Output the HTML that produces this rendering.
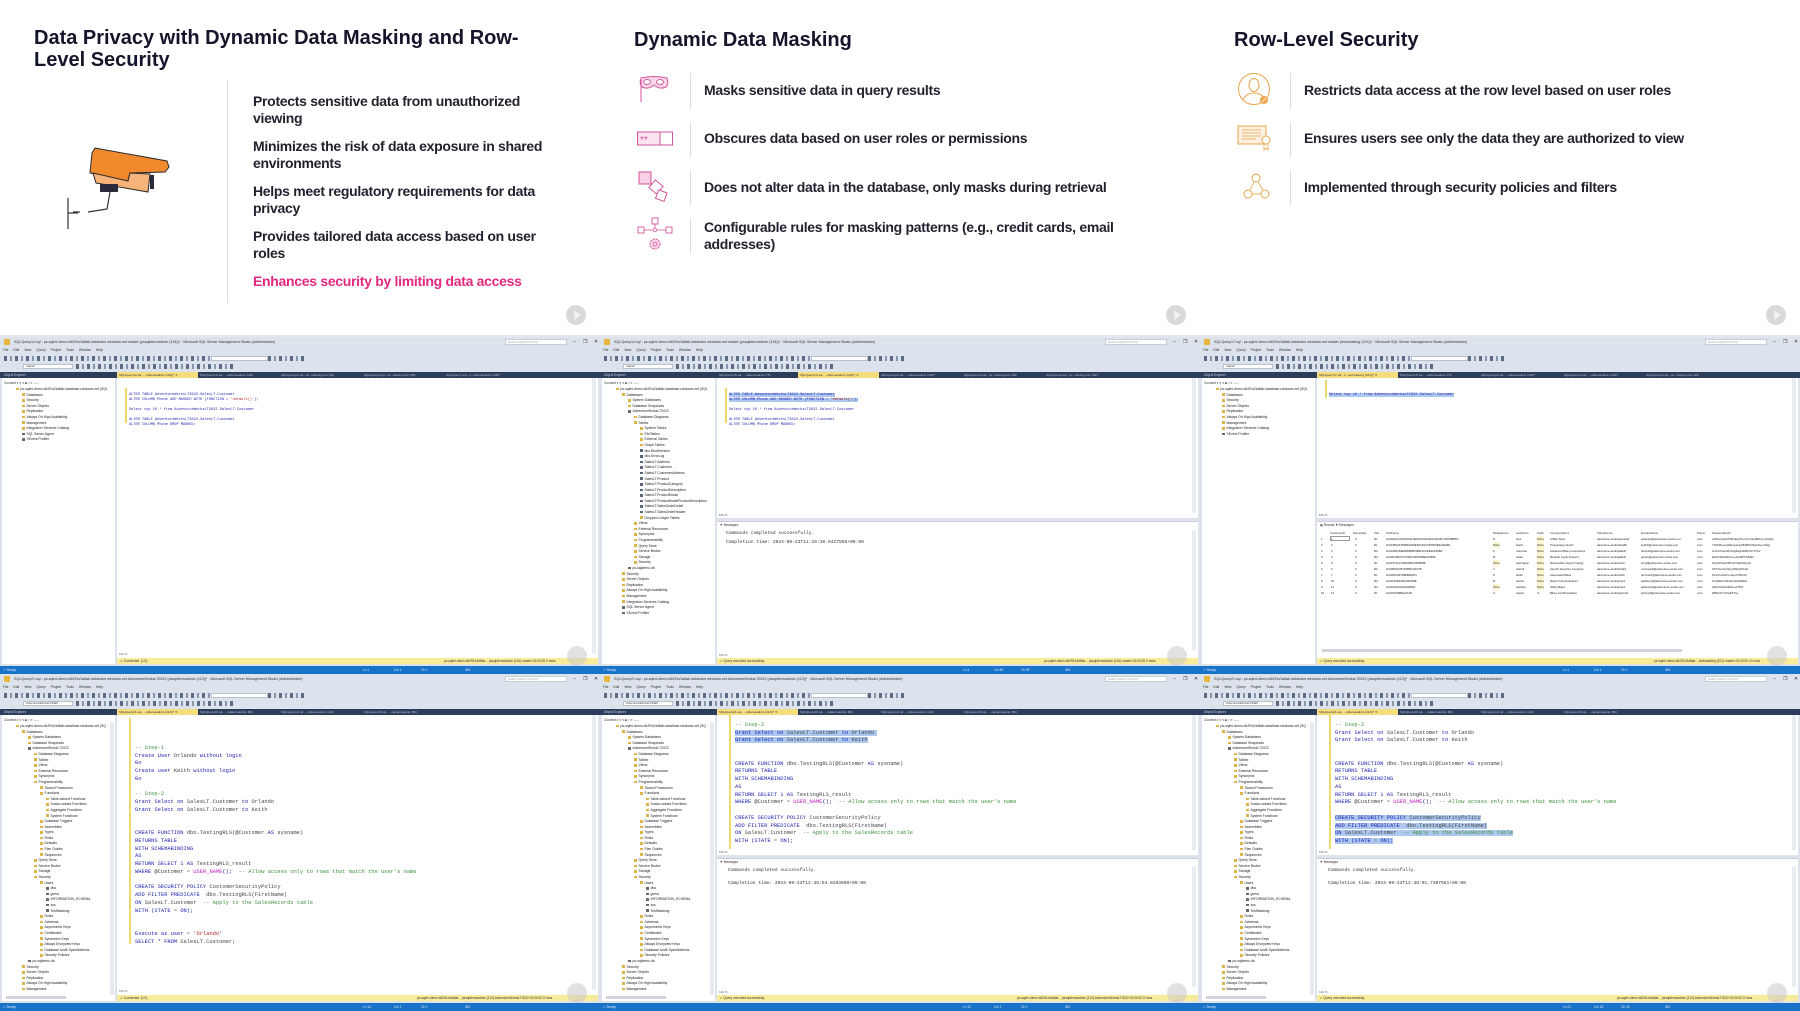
<!DOCTYPE html>
<html><head><meta charset="utf-8">
<style>
*{margin:0;padding:0;box-sizing:border-box}
body{width:1800px;height:1011px;background:#fff;position:relative;overflow:hidden;font-family:"Liberation Sans",sans-serif}
.slide{position:absolute;top:0;width:600px;height:337px;background:#fff;overflow:hidden}
.slide .h{position:absolute;left:34px;top:27px;font-size:20px;line-height:22px;font-weight:bold;color:#14142b;white-space:nowrap}
.slide .b{position:absolute;font-size:14px;line-height:17px;font-weight:bold;color:#22222e;letter-spacing:-0.3px;white-space:nowrap}
.slide .sep{position:absolute;width:1px;background:#ddd}
.play{position:absolute;width:20px;height:20px;border-radius:50%;background:#d9d9d9}
.play:after{content:"";position:absolute;left:8px;top:5px;border-left:7px solid #f2f2f2;border-top:5px solid transparent;border-bottom:5px solid transparent}
.strip{position:absolute;left:0;top:335px;width:1800px;height:2px;background:#e5e7ea}

.win{position:absolute;width:600px;height:337px;background:#dde3ec;overflow:hidden;font-family:"Liberation Sans",sans-serif;color:#333}
.win .tt{position:absolute;left:14px;top:3px;font-size:3.6px;white-space:nowrap;color:#333}
.win .ico{position:absolute;left:4px;top:2px;width:6px;height:6px;background:#e8b43a;border-radius:1px}
.win .qs{position:absolute;left:505px;top:2px;width:62px;height:6px;background:#fff;border:1px solid #c9cfd8;font-size:3px;color:#999;padding-left:2px;line-height:4px}
.win .ctl{position:absolute;top:2px;font-size:5px;color:#333}
.win .mn{position:absolute;left:3px;top:11px;font-size:3.4px;word-spacing:4px;white-space:nowrap}
.win .tb{position:absolute;left:4px;height:5px;width:300px;background:repeating-linear-gradient(90deg,#5a6b86 0 3px,transparent 3px 6px,#8a96aa 6px 8px,transparent 8px 11px)}
.win .box{position:absolute;height:5px;background:#fff;border:1px solid #b9c1cc;font-size:3px;line-height:3.5px;padding-left:2px}
.win .dk{position:absolute;left:0;top:35px;width:600px;height:6px;background:#2c3d5b}
.win .oeh{position:absolute;left:4px;top:36px;font-size:3.2px;color:#c8d0de;white-space:nowrap}
.win .tab{position:absolute;top:35px;height:6px;width:81px;font-size:3px;line-height:6px;color:#b8c2d4;padding-left:2px;white-space:nowrap;overflow:hidden}
.win .tab.a{background:#f5dc7c;color:#333}
.win .oe{position:absolute;left:2px;top:41px;width:113px;height:286px;background:#fff;overflow:hidden}
.win .con{position:absolute;left:2px;top:2px;font-size:3.2px;color:#333;white-space:nowrap}
.win .tr{position:absolute;left:0;top:9px;width:113px}
.win .tr div{height:5.6px;font-size:3.4px;line-height:5.6px;white-space:nowrap;color:#222;position:relative}
.win .tr div:before{content:"";display:inline-block;width:3px;height:2.6px;background:#dcb549;margin-right:1.5px;vertical-align:middle}
.win .tr div.u:before{background:#6b6b6b}
.win .tr div.tbl:before{background:#5b6579}
.win .ed{position:absolute;left:117px;top:41px;width:481px;height:280px;background:#fff;overflow:hidden}
.win .mg{position:absolute;width:1.5px;background:#efd96a}
.win .code{position:absolute;font-family:"Liberation Mono",monospace;white-space:pre;color:#1b1bb0}
.win .code div{white-space:pre}
.g{color:#3d8f3d}.r{color:#b21d1d}.k{color:#2424c0}.d{color:#444}.m{color:#c020c0}.gr{color:#888}
.sel{background:#acc8ef}
.win .vs{position:absolute;right:2px;width:4px;background:#e9ecf0}
.win .ys{position:absolute;left:117px;top:321px;width:481px;height:6px;background:#f8ec9a;font-size:3.2px;line-height:6px;white-space:nowrap;color:#333}
.win .bs{position:absolute;left:0;top:329px;width:600px;height:8px;background:#1872c9;font-size:3.2px;line-height:8px;color:#dbe8f7;white-space:nowrap}
.win .bs span{position:absolute}
.win .pp{position:absolute;left:567px;top:309px;width:20px;height:20px;border-radius:50%;background:rgba(200,200,200,.55)}
.win .zm{position:absolute;font-size:3px;color:#555}
.win .pane{position:absolute;left:117px;width:481px;background:#fff;overflow:hidden}
.win .ptab{position:absolute;font-size:3.2px;color:#333;white-space:nowrap}
.win .msg{position:absolute;font-family:"Liberation Mono",monospace;font-size:4.6px;color:#333;white-space:pre}
.grid{position:absolute;left:0;top:0;font-size:2.8px;color:#222;white-space:nowrap}
.grid div{position:absolute;height:6px;line-height:6px;width:480px}
.grid span{position:absolute;overflow:hidden}
.hs{position:absolute;height:3px;background:#cfd4db}
</style></head><body>

<!-- ============ SLIDE 1 ============ -->
<div class="slide" style="left:0">
  <div class="h">Data Privacy with Dynamic Data Masking and Row-<br>Level Security</div>
  <div class="sep" style="left:227px;top:80px;height:223px"></div>
  <svg style="position:absolute;left:60px;top:140px" width="120" height="100" viewBox="60 140 120 100">
    <polygon points="95,148 167,161 169,167 165,172 130,173 128,181 90,173 92,153" fill="#f08a2c" stroke="#2a2a2a" stroke-width="1"/>
    <polygon points="93,173 128,181 130,173 150,174 148,192 96,183" fill="#f6b47a" stroke="#2a2a2a" stroke-width="1"/>
    <rect x="150" y="175" width="4" height="14" fill="#2a2a3a"/>
    <rect x="100" y="184" width="18" height="8" fill="#2a2a3a"/>
    <polyline points="110,192 107,209 88,212" fill="none" stroke="#333" stroke-width="1.2"/>
    <line x1="80" y1="212" x2="73" y2="212" stroke="#333" stroke-width="1.2"/>
    <line x1="68" y1="198" x2="68" y2="229" stroke="#333" stroke-width="1.2"/>
    <line x1="68" y1="213" x2="78" y2="213" stroke="#333" stroke-width="1.2"/>
  </svg>
  <div class="b" style="left:253px;top:93px">Protects sensitive data from unauthorized<br>viewing</div>
  <div class="b" style="left:253px;top:138px">Minimizes the risk of data exposure in shared<br>environments</div>
  <div class="b" style="left:253px;top:183px">Helps meet regulatory requirements for data<br>privacy</div>
  <div class="b" style="left:253px;top:228px">Provides tailored data access based on user<br>roles</div>
  <div class="b" style="left:253px;top:273px;color:#e3287f">Enhances security by limiting data access</div>
  <div class="play" style="left:566px;top:305px"></div>
</div>

<!-- ============ SLIDE 2 ============ -->
<div class="slide" style="left:600px">
  <div class="h" style="top:29px">Dynamic Data Masking</div>
  <svg style="position:absolute;left:36px;top:74px" width="40" height="32" viewBox="0 0 40 32">
    <path d="M5 4 Q18 1 31 4 Q33 10 30 13 Q24 16 18 11 Q12 16 6 13 Q3 10 5 4Z" fill="#f9d6e8" stroke="#d4559b" stroke-width="1"/>
    <ellipse cx="11" cy="8" rx="3.5" ry="2.5" fill="#fff" stroke="#d4559b" stroke-width=".9"/>
    <ellipse cx="24" cy="8" rx="3.5" ry="2.5" fill="#fff" stroke="#d4559b" stroke-width=".9"/>
    <line x1="5" y1="6" x2="5" y2="28" stroke="#d4559b" stroke-width="1"/>
  </svg>
  <div class="sep" style="left:90px;top:73px;height:36px"></div>
  <div class="b" style="left:104px;top:82px">Masks sensitive data in query results</div>

  <svg style="position:absolute;left:36px;top:130px" width="40" height="18" viewBox="0 0 40 18">
    <rect x="1.5" y="2" width="35" height="13" fill="#fbe3ef" stroke="#d4559b" stroke-width="1"/>
    <rect x="24" y="2" width="12.5" height="13" fill="#fff" stroke="#d4559b" stroke-width="1"/>
    <text x="4" y="13" font-size="10" fill="#d4559b" font-family="Liberation Sans">**</text>
  </svg>
  <div class="sep" style="left:90px;top:122px;height:35px"></div>
  <div class="b" style="left:104px;top:130px">Obscures data based on user roles or permissions</div>

  <svg style="position:absolute;left:36px;top:170px" width="40" height="34" viewBox="0 0 40 34">
    <rect x="3" y="2" width="12" height="12" fill="#f9cfe3" stroke="#d4559b" stroke-width="1"/>
    <rect x="15" y="12" width="10" height="10" transform="rotate(40 20 17)" fill="#fff" stroke="#d4559b" stroke-width="1"/>
    <rect x="21" y="21" width="9" height="9" transform="rotate(20 25 25)" fill="#fff" stroke="#d4559b" stroke-width="1"/>
  </svg>
  <div class="sep" style="left:90px;top:170px;height:35px"></div>
  <div class="b" style="left:104px;top:179px">Does not alter data in the database, only masks during retrieval</div>

  <svg style="position:absolute;left:36px;top:216px" width="40" height="40" viewBox="0 0 40 40">
    <rect x="16" y="2" width="6" height="6" fill="none" stroke="#d4559b" stroke-width=".9"/>
    <line x1="19" y1="8" x2="19" y2="13" stroke="#d4559b" stroke-width=".8"/>
    <rect x="2" y="11" width="6" height="6" fill="none" stroke="#d4559b" stroke-width=".9"/>
    <rect x="30" y="11" width="6" height="6" fill="none" stroke="#d4559b" stroke-width=".9"/>
    <line x1="8" y1="14" x2="30" y2="14" stroke="#d4559b" stroke-width=".8"/>
    <circle cx="19" cy="14" r="1.8" fill="#fff" stroke="#d4559b" stroke-width=".8"/>
    <circle cx="19" cy="28" r="5" fill="#f9d6e8" stroke="#d4559b" stroke-width="1" stroke-dasharray="2 1"/>
    <circle cx="19" cy="28" r="2" fill="none" stroke="#d4559b" stroke-width=".8"/>
  </svg>
  <div class="sep" style="left:90px;top:218px;height:36px"></div>
  <div class="b" style="left:104px;top:219px">Configurable rules for masking patterns (e.g., credit cards, email<br>addresses)</div>
  <div class="play" style="left:566px;top:305px"></div>
</div>

<!-- ============ SLIDE 3 ============ -->
<div class="slide" style="left:1200px">
  <div class="h" style="top:29px">Row-Level Security</div>
  <svg style="position:absolute;left:36px;top:72px" width="40" height="36" viewBox="0 0 40 36">
    <circle cx="18" cy="17" r="15.5" fill="#fff" stroke="#e8a54c" stroke-width="1"/>
    <ellipse cx="18" cy="13" rx="5" ry="6.5" fill="#fff" stroke="#e8a54c" stroke-width="1"/>
    <path d="M7 28 Q10 21 18 21 Q26 21 29 28" fill="none" stroke="#e8a54c" stroke-width="1"/>
    <circle cx="28" cy="28" r="4" fill="#f1a552"/>
    <line x1="26" y1="30" x2="30" y2="26" stroke="#fff" stroke-width=".8"/>
  </svg>
  <div class="sep" style="left:90px;top:73px;height:36px"></div>
  <div class="b" style="left:104px;top:82px">Restricts data access at the row level based on user roles</div>

  <svg style="position:absolute;left:36px;top:124px" width="40" height="30" viewBox="0 0 40 30">
    <rect x="2" y="2" width="28" height="18" fill="#fdf1e2" stroke="#e8a54c" stroke-width="1"/>
    <line x1="6" y1="6" x2="25" y2="6" stroke="#e8a54c" stroke-width=".8"/>
    <line x1="6" y1="9" x2="25" y2="9" stroke="#e8a54c" stroke-width=".8"/>
    <line x1="6" y1="12" x2="25" y2="12" stroke="#e8a54c" stroke-width=".8"/>
    <line x1="6" y1="15" x2="20" y2="15" stroke="#e8a54c" stroke-width=".8"/>
    <circle cx="30" cy="16" r="4" fill="#fff" stroke="#e8a54c" stroke-width="1"/>
    <path d="M28 20 L28 26 L30 24 L32 26 L32 20" fill="none" stroke="#e8a54c" stroke-width=".8"/>
  </svg>
  <div class="sep" style="left:90px;top:122px;height:35px"></div>
  <div class="b" style="left:104px;top:130px">Ensures users see only the data they are authorized to view</div>

  <svg style="position:absolute;left:36px;top:172px" width="40" height="32" viewBox="0 0 40 32">
    <circle cx="20" cy="6" r="4" fill="#fff" stroke="#e8a54c" stroke-width="1"/>
    <circle cx="12" cy="22" r="4" fill="#fff" stroke="#e8a54c" stroke-width="1"/>
    <circle cx="29" cy="22" r="4" fill="#fff" stroke="#e8a54c" stroke-width="1"/>
    <line x1="18" y1="10" x2="14" y2="18" stroke="#e8a54c" stroke-width=".8"/>
    <line x1="22" y1="10" x2="27" y2="18" stroke="#e8a54c" stroke-width=".8"/>
    <line x1="16" y1="22" x2="25" y2="22" stroke="#e8a54c" stroke-width=".8"/>
  </svg>
  <div class="sep" style="left:90px;top:170px;height:35px"></div>
  <div class="b" style="left:104px;top:179px">Implemented through security policies and filters</div>
  <div class="play" style="left:566px;top:305px"></div>
</div>
<div class="strip"></div>

<!-- ============ ROW 2 LEFT ============ -->
<div class="win" style="left:0;top:337px">
  <div class="ico"></div>
  <div class="tt">SQLQuery14.sql - ps-sqlmi-demo.b6291e3a8ab.database.windows.net.master (pssqldemoadmin (124))* - Microsoft SQL Server Management Studio (Administrator)</div>
  <div class="qs">Quick Launch (Ctrl+Q)</div>
  <div class="ctl" style="left:573px">–</div><div class="ctl" style="left:583px">❐</div><div class="ctl" style="left:594px">✕</div>
  <div class="mn">File Edit View Query Project Tools Window Help</div>
  <div class="tb" style="top:19px"></div><div class="box" style="left:211px;top:19px;width:57px"></div>
  <div class="tb" style="top:27px;left:76px;width:160px"></div><div class="box" style="left:23px;top:27px;width:50px">master</div>
  <div class="dk"></div><div class="oeh">Object Explorer</div>
  <div class="tab a" style="left:117px">SQLQuery14.sql - ...pldemoadmin (124))* ✕</div>
  <div class="tab" style="left:198px">SQLQuery13.sql - ...pldemoadmin (120)</div>
  <div class="tab" style="left:279px">SQLQuery12.sql - ps...training.com (99)</div>
  <div class="tab" style="left:362px">SQLQuery9.sql - ps...training.com (84)*</div>
  <div class="tab" style="left:444px">SQLQuery7.sql - p...pldemoadmin (105)*</div>
  <div class="oe"><div class="con">Connect ▾ ⚲ ▾ ■ ▿ ⟳ ⸺</div>
    <div class="tr">
      <div style="padding-left:14px">ps-sqlmi-demo.b6291e3a8ab.database.windows.net (SQL</div>
      <div style="padding-left:20px">Databases</div><div style="padding-left:20px">Security</div>
      <div style="padding-left:20px">Server Objects</div><div style="padding-left:20px">Replication</div>
      <div style="padding-left:20px">Always On High Availability</div><div style="padding-left:20px">Management</div>
      <div style="padding-left:20px">Integration Services Catalog</div><div class="u" style="padding-left:20px">SQL Server Agent</div>
      <div class="u" style="padding-left:20px">XEvent Profiler</div>
    </div></div>
  <div class="ed">
    <div class="mg" style="left:8px;top:10px;height:35px"></div>
    <div class="code" style="left:12px;top:10px;font-size:3.6px;line-height:5px">
<div>ALTER TABLE AdventureWorksLT2022.SalesLT.Customer</div><div>ALTER COLUMN Phone ADD MASKED WITH (FUNCTION = <span class="r">'default()'</span>);</div><div> </div><div>Select top 10 * from AdventureWorksLT2022.SalesLT.Customer</div><div> </div><div>ALTER TABLE AdventureWorksLT2022.SalesLT.Customer</div><div>ALTER COLUMN Phone DROP MASKED;</div>
    </div>
    <div class="vs" style="top:0;height:275px"></div>
    <div class="zm" style="left:2px;top:274px">100 %</div>
  </div>
  <div class="ys"><span style="margin-left:3px">⚠ Connected. (1/1)</span><span style="position:absolute;left:327px">ps-sqlmi-demo.b6291e3a8ab... pssqldemoadmin (124)  master  00:00:00  0 rows</span></div>
  <div class="bs"><span style="left:3px">☐ Ready</span><span style="left:363px">Ln 1</span><span style="left:394px">Col 1</span><span style="left:421px">Ch 1</span><span style="left:465px">INS</span></div>
  <div class="pp"></div>
</div>

<!-- ============ ROW 2 MIDDLE ============ -->
<div class="win" style="left:600px;top:337px">
  <div class="ico"></div>
  <div class="tt">SQLQuery14.sql - ps-sqlmi-demo.b6291e3a8ab.database.windows.net.master (pssqldemoadmin (124))* - Microsoft SQL Server Management Studio (Administrator)</div>
  <div class="qs">Quick Launch (Ctrl+Q)</div>
  <div class="ctl" style="left:573px">–</div><div class="ctl" style="left:583px">❐</div><div class="ctl" style="left:594px">✕</div>
  <div class="mn">File Edit View Query Project Tools Window Help</div>
  <div class="tb" style="top:19px"></div><div class="box" style="left:211px;top:19px;width:57px"></div>
  <div class="tb" style="top:27px;left:76px;width:160px"></div><div class="box" style="left:23px;top:27px;width:50px">master</div>
  <div class="dk"></div><div class="oeh">Object Explorer</div>
  <div class="tab" style="left:117px">SQLQuery15.sql - ...pldemoadmin (75)</div>
  <div class="tab a" style="left:198px">SQLQuery14.sql - ...pldemoadmin (124))* ✕</div>
  <div class="tab" style="left:279px">SQLQuery13.sql - ...pldemoadmin (120)*</div>
  <div class="tab" style="left:362px">SQLQuery12.sql - ps...training.com (99)</div>
  <div class="tab" style="left:444px">SQLQuery9.sql - ps...training.com (84)*</div>
  <div class="oe"><div class="con">Connect ▾ ⚲ ▾ ■ ▿ ⟳ ⸺</div>
    <div class="tr">
      <div style="padding-left:14px">ps-sqlmi-demo.b6291e3a8ab.database.windows.net (SQL</div>
      <div style="padding-left:20px">Databases</div>
      <div style="padding-left:26px">System Databases</div><div style="padding-left:26px">Database Snapshots</div>
      <div class="u" style="padding-left:26px">AdventureWorksLT2022</div>
      <div style="padding-left:32px">Database Diagrams</div><div style="padding-left:32px">Tables</div>
      <div style="padding-left:38px">System Tables</div><div style="padding-left:38px">FileTables</div>
      <div style="padding-left:38px">External Tables</div><div style="padding-left:38px">Graph Tables</div>
      <div class="tbl" style="padding-left:38px">dbo.BuildVersion</div><div class="tbl" style="padding-left:38px">dbo.ErrorLog</div>
      <div class="tbl" style="padding-left:38px">SalesLT.Address</div><div class="tbl" style="padding-left:38px">SalesLT.Customer</div>
      <div class="tbl" style="padding-left:38px">SalesLT.CustomerAddress</div><div class="tbl" style="padding-left:38px">SalesLT.Product</div>
      <div class="tbl" style="padding-left:38px">SalesLT.ProductCategory</div><div class="tbl" style="padding-left:38px">SalesLT.ProductDescription</div>
      <div class="tbl" style="padding-left:38px">SalesLT.ProductModel</div><div class="tbl" style="padding-left:38px">SalesLT.ProductModelProductDescription</div>
      <div class="tbl" style="padding-left:38px">SalesLT.SalesOrderDetail</div><div class="tbl" style="padding-left:38px">SalesLT.SalesOrderHeader</div>
      <div style="padding-left:38px">Dropped Ledger Tables</div>
      <div style="padding-left:32px">Views</div><div style="padding-left:32px">External Resources</div>
      <div style="padding-left:32px">Synonyms</div><div style="padding-left:32px">Programmability</div>
      <div style="padding-left:32px">Query Store</div><div style="padding-left:32px">Service Broker</div>
      <div style="padding-left:32px">Storage</div><div style="padding-left:32px">Security</div>
      <div class="u" style="padding-left:26px">ps-sqldemo-db</div>
      <div style="padding-left:20px">Security</div><div style="padding-left:20px">Server Objects</div>
      <div style="padding-left:20px">Replication</div><div style="padding-left:20px">Always On High Availability</div>
      <div style="padding-left:20px">Management</div><div style="padding-left:20px">Integration Services Catalog</div>
      <div class="u" style="padding-left:20px">SQL Server Agent</div><div class="u" style="padding-left:20px">XEvent Profiler</div>
    </div></div>
  <div class="ed" style="height:140px">
    <div class="mg" style="left:8px;top:10px;height:35px"></div>
    <div class="code" style="left:12px;top:10px;font-size:3.6px;line-height:5px">
<div><span class="sel">ALTER TABLE AdventureWorksLT2022.SalesLT.Customer</span></div><div><span class="sel">ALTER COLUMN Phone ADD MASKED WITH (FUNCTION = <span class="r">'default()'</span>);</span></div><div> </div><div>Select top 10 * from AdventureWorksLT2022.SalesLT.Customer</div><div> </div><div>ALTER TABLE AdventureWorksLT2022.SalesLT.Customer</div><div>ALTER COLUMN Phone DROP MASKED;</div>
    </div>
    <div class="vs" style="top:0;height:135px"></div>
    <div class="zm" style="left:2px;top:135px">100 %</div>
  </div>
  <div class="pane" style="top:184px;height:137px;border-top:1px solid #ccd">
    <div class="ptab" style="left:3px;top:1px">⚑ Messages</div>
    <div class="msg" style="left:9px;top:9px">Commands completed successfully.</div>
    <div class="msg" style="left:9px;top:18px">Completion time: 2024-09-23T11:16:30.0427556+00:00</div>
    <div class="vs" style="top:8px;height:120px"></div>
    <div class="zm" style="left:2px;top:131px">100 %</div>
  </div>
  <div class="ys"><span style="margin-left:3px;color:#2a7a2a">✔</span> Query executed successfully.<span style="position:absolute;left:327px">ps-sqlmi-demo.b6291e3a8ab... pssqldemoadmin (124)  master  00:00:00  0 rows</span></div>
  <div class="bs"><span style="left:3px">☐ Ready</span><span style="left:363px">Ln 4</span><span style="left:394px">Col 59</span><span style="left:421px">Ch 59</span><span style="left:465px">INS</span></div>
  <div class="pp"></div>
</div>

<!-- ============ ROW 2 RIGHT ============ -->
<div class="win" style="left:1200px;top:337px">
  <div class="ico"></div>
  <div class="tt">SQLQuery17.sql - ps-sqlmi-demo.b6291e3a8ab.database.windows.net.master (testmasking (101))* - Microsoft SQL Server Management Studio (Administrator)</div>
  <div class="qs">Quick Launch (Ctrl+Q)</div>
  <div class="ctl" style="left:573px">–</div><div class="ctl" style="left:583px">❐</div><div class="ctl" style="left:594px">✕</div>
  <div class="mn">File Edit View Query Project Tools Window Help</div>
  <div class="tb" style="top:19px"></div><div class="box" style="left:211px;top:19px;width:57px"></div>
  <div class="tb" style="top:27px;left:76px;width:160px"></div><div class="box" style="left:23px;top:27px;width:50px">master</div>
  <div class="dk"></div><div class="oeh">Object Explorer</div>
  <div class="tab a" style="left:117px">SQLQuery17.sql - p...testmasking (101))* ✕</div>
  <div class="tab" style="left:198px">SQLQuery15.sql - ...pldemoadmin (75)</div>
  <div class="tab" style="left:279px">SQLQuery14.sql - ...pldemoadmin (124)*</div>
  <div class="tab" style="left:362px">SQLQuery13.sql - ...pldemoadmin (120)*</div>
  <div class="tab" style="left:444px">SQLQuery12.sql - ps...training.com (99)</div>
  <div class="oe"><div class="con">Connect ▾ ⚲ ▾ ■ ▿ ⟳ ⸺</div>
    <div class="tr">
      <div style="padding-left:14px">ps-sqlmi-demo.b6291e3a8ab.database.windows.net (SQL</div>
      <div style="padding-left:20px">Databases</div><div style="padding-left:20px">Security</div>
      <div style="padding-left:20px">Server Objects</div><div style="padding-left:20px">Replication</div>
      <div style="padding-left:20px">Always On High Availability</div><div style="padding-left:20px">Management</div>
      <div style="padding-left:20px">Integration Services Catalog</div><div class="u" style="padding-left:20px">XEvent Profiler</div>
    </div></div>
  <div class="ed" style="height:140px">
    <div class="mg" style="left:8px;top:2px;height:18px"></div>
    <div class="code" style="left:12px;top:10px;font-size:3.6px;line-height:5px">
<div><span class="sel">Select top 10 * from AdventureWorksLT2022.SalesLT.Customer</span></div>
    </div>
    <div class="vs" style="top:0;height:135px"></div>
    <div class="zm" style="left:2px;top:135px">100 %</div>
  </div>
  <div class="pane" style="top:184px;height:137px;border-top:1px solid #ccd">
    <div class="ptab" style="left:3px;top:1px">▦ Results  ⚑ Messages</div>
    <div class="grid" style="top:8px">
      <div style="top:0;color:#333"><span style="left:13px">CustomerID</span><span style="left:36px">NameStyle</span><span style="left:57px">Title</span><span style="left:69px">FirstName</span><span style="left:176px">MiddleName</span><span style="left:199px">LastName</span><span style="left:220px">Suffix</span><span style="left:233px">CompanyName</span><span style="left:280px">SalesPerson</span><span style="left:324px">EmailAddress</span><span style="left:380px">Phone</span><span style="left:395px">PasswordHash</span></div>
      <div style="top:6px"><span style="left:4px">1</span><span style="left:13px;border:1px solid #999;width:20px;height:5px;line-height:4px">1</span><span style="left:38px">0</span><span style="left:57px">Mr.</span><span style="left:69px;width:100px">0x01F0AC2D2A5A3F3E52A0A4A8A4A4F65C145F3BB5C</span><span style="left:176px">N.</span><span style="left:199px">Gee</span><span style="left:220px;background:#fbf6d0">NULL</span><span style="left:233px">A Bike Store</span><span style="left:280px">adventure-works\pamela0</span><span style="left:324px">orlando0@adventure-works.com</span><span style="left:380px">xxxx</span><span style="left:395px;width:85px">L/Rlwxzp4w7RWmEgXX+/A7cXaePEPcp+KwQhl</span></div>
      <div style="top:12px"><span style="left:4px">2</span><span style="left:14px">2</span><span style="left:38px">0</span><span style="left:57px">Mr.</span><span style="left:69px;width:100px">0x014B4244F5BF3049E3D0A0C6F5503E5A4E0B1</span><span style="left:176px;background:#fbf6d0">NULL</span><span style="left:199px">Harris</span><span style="left:220px;background:#fbf6d0">NULL</span><span style="left:233px">Progressive Sports</span><span style="left:280px">adventure-works\david8</span><span style="left:324px">keith0@adventure-works.com</span><span style="left:380px">xxxx</span><span style="left:395px;width:85px">YPdhMnoeHbAbnyeGoF8ihBChNwCHe+Cf9gj</span></div>
      <div style="top:18px"><span style="left:4px">3</span><span style="left:14px">3</span><span style="left:38px">0</span><span style="left:57px">Ms.</span><span style="left:69px;width:100px">0x01A6FF83E9983B6F9B9F1F9DE3AF90BF</span><span style="left:176px">F.</span><span style="left:199px">Carreras</span><span style="left:220px;background:#fbf6d0">NULL</span><span style="left:233px">Advanced Bike Components</span><span style="left:280px">adventure-works\jillian0</span><span style="left:324px">donna0@adventure-works.com</span><span style="left:380px">xxxx</span><span style="left:395px;width:85px">LNoiU7tetnb6vXAg5ayb00MV/HYF7eV</span></div>
      <div style="top:24px"><span style="left:4px">4</span><span style="left:14px">4</span><span style="left:38px">0</span><span style="left:57px">Ms.</span><span style="left:69px;width:100px">0x011F0B1F7F7D9F61D5CB9E0A0B4F</span><span style="left:176px">M.</span><span style="left:199px">Gates</span><span style="left:220px;background:#fbf6d0">NULL</span><span style="left:233px">Modular Cycle Systems</span><span style="left:280px">adventure-works\jillian0</span><span style="left:324px">janet1@adventure-works.com</span><span style="left:380px">xxxx</span><span style="left:395px;width:85px">ElzTpSMsiAK1Iv+LhlvMPT/MH6d</span></div>
      <div style="top:30px"><span style="left:4px">5</span><span style="left:14px">5</span><span style="left:38px">0</span><span style="left:57px">Mr.</span><span style="left:69px;width:100px">0x017F1C1C09F2B91D53808B</span><span style="left:176px;background:#fbf6d0">NULL</span><span style="left:199px">Harrington</span><span style="left:220px;background:#fbf6d0">NULL</span><span style="left:233px">Metropolitan Sports Supply</span><span style="left:280px">adventure-works\shu0</span><span style="left:324px">lucy0@adventure-works.com</span><span style="left:380px">xxxx</span><span style="left:395px;width:85px">KJqV15wsX3PLsFT1E6Gbopfo</span></div>
      <div style="top:36px"><span style="left:4px">6</span><span style="left:14px">6</span><span style="left:38px">0</span><span style="left:57px">Ms.</span><span style="left:69px;width:100px">0x01B0A07B7F0B9F11107B</span><span style="left:176px">J.</span><span style="left:199px">Carroll</span><span style="left:220px;background:#fbf6d0">NULL</span><span style="left:233px">Aerobic Exercise Company</span><span style="left:280px">adventure-works\linda3</span><span style="left:324px">rosmarie0@adventure-works.com</span><span style="left:380px">xxxx</span><span style="left:395px;width:85px">OKT0scoCc0pyvhWdyWGdC</span></div>
      <div style="top:42px"><span style="left:4px">7</span><span style="left:14px">7</span><span style="left:38px">0</span><span style="left:57px">Mr.</span><span style="left:69px;width:100px">0x018CF3679B0B92F51</span><span style="left:176px">P.</span><span style="left:199px">Gash</span><span style="left:220px;background:#fbf6d0">NULL</span><span style="left:233px">Associated Bikes</span><span style="left:280px">adventure-works\shu0</span><span style="left:324px">dominic0@adventure-works.com</span><span style="left:380px">xxxx</span><span style="left:395px;width:85px">ZccoP+ZG0m+4qoz7RKvOr</span></div>
      <div style="top:48px"><span style="left:4px">8</span><span style="left:14px">10</span><span style="left:38px">0</span><span style="left:57px">Ms.</span><span style="left:69px;width:100px">0x01F4383CB1400188E</span><span style="left:176px">R.</span><span style="left:199px">Garza</span><span style="left:220px;background:#fbf6d0">NULL</span><span style="left:233px">Rural Cycle Emporium</span><span style="left:280px">adventure-works\josé1</span><span style="left:324px">kathleen0@adventure-works.com</span><span style="left:380px">xxxx</span><span style="left:395px;width:85px">GoSdMCsNb1GkUbAWabfa</span></div>
      <div style="top:54px"><span style="left:4px">9</span><span style="left:14px">11</span><span style="left:38px">0</span><span style="left:57px">Ms.</span><span style="left:69px;width:100px">0x01F09CA2A2F0850F</span><span style="left:176px;background:#fbf6d0">NULL</span><span style="left:199px">Harding</span><span style="left:220px;background:#fbf6d0">NULL</span><span style="left:233px">Sharp Bikes</span><span style="left:280px">adventure-works\josé1</span><span style="left:324px">katherine0@adventure-works.com</span><span style="left:380px">xxxx</span><span style="left:395px;width:85px">uRkvVeDGA2D9+eh7PH</span></div>
      <div style="top:60px"><span style="left:4px">10</span><span style="left:14px">12</span><span style="left:38px">0</span><span style="left:57px">Mr.</span><span style="left:69px;width:100px">0x01F92085FE2A4D</span><span style="left:176px">A.</span><span style="left:199px">Caprio</span><span style="left:220px">Jr.</span><span style="left:233px">Bikes and Motorbikes</span><span style="left:280px">adventure-works\garrett1</span><span style="left:324px">johnny0@adventure-works.com</span><span style="left:380px">xxxx</span><span style="left:395px;width:85px">jPB6v/FYv7FaETTxa</span></div>
    </div>
    <div class="hs" style="left:5px;top:127px;width:360px"></div>
  </div>
  <div class="ys"><span style="margin-left:3px;color:#2a7a2a">✔</span> Query executed successfully.<span style="position:absolute;left:337px">ps-sqlmi-demo.b6291e3a8ab... testmasking (101)  master  00:00:00  10 rows</span></div>
  <div class="bs"><span style="left:3px">☐ Ready</span><span style="left:363px">Ln 1</span><span style="left:394px">Col 1</span><span style="left:421px">Ch 1</span><span style="left:465px">INS</span></div>
  <div class="pp"></div>
</div>

<!-- ============ ROW 3 template tree reused ============ -->
<!-- ROW 3 LEFT -->
<div class="win" style="left:0;top:674px">
  <div class="ico"></div>
  <div class="tt">SQLQuery21.sql - ps-sqlmi-demo.b6291e3a8ab.database.windows.net.AdventureWorksLT2022 (pssqldemoadmin (113))* - Microsoft SQL Server Management Studio (Administrator)</div>
  <div class="qs">Quick Launch (Ctrl+Q)</div>
  <div class="ctl" style="left:573px">–</div><div class="ctl" style="left:583px">❐</div><div class="ctl" style="left:594px">✕</div>
  <div class="mn">File Edit View Query Project Tools Window Help</div>
  <div class="tb" style="top:19px"></div><div class="box" style="left:211px;top:19px;width:57px"></div>
  <div class="tb" style="top:27px;left:76px;width:160px"></div><div class="box" style="left:23px;top:27px;width:50px">AdventureWorksLT2022</div>
  <div class="dk"></div><div class="oeh">Object Explorer</div>
  <div class="tab a" style="left:117px">SQLQuery21.sql - ...pldemoadmin (113))* ✕</div>
  <div class="tab" style="left:198px">SQLQuery20.sql - ...sqldemoadmin (80)</div>
  <div class="tab" style="left:279px">SQLQuery19.sql - ...pldemoadmin (116)</div>
  <div class="tab" style="left:362px">SQLQuery18.sql - ...sqldemoadmin (80)</div>
  <div class="oe"><div class="con">Connect ▾ ⚲ ▾ ■ ▿ ⟳ ⸺</div>
    <div class="tr">
      <div style="padding-left:14px">ps-sqlmi-demo.b6291e3a8ab.database.windows.net (SQ</div>
      <div style="padding-left:20px">Databases</div>
      <div style="padding-left:26px">System Databases</div><div style="padding-left:26px">Database Snapshots</div>
      <div class="u" style="padding-left:26px">AdventureWorksLT2022</div>
      <div style="padding-left:32px">Database Diagrams</div><div style="padding-left:32px">Tables</div><div style="padding-left:32px">Views</div>
      <div style="padding-left:32px">External Resources</div><div style="padding-left:32px">Synonyms</div><div style="padding-left:32px">Programmability</div>
      <div style="padding-left:38px">Stored Procedures</div><div style="padding-left:38px">Functions</div>
      <div style="padding-left:44px">Table-valued Functions</div><div style="padding-left:44px">Scalar-valued Functions</div>
      <div style="padding-left:44px">Aggregate Functions</div><div style="padding-left:44px">System Functions</div>
      <div style="padding-left:38px">Database Triggers</div><div style="padding-left:38px">Assemblies</div><div style="padding-left:38px">Types</div>
      <div style="padding-left:38px">Rules</div><div style="padding-left:38px">Defaults</div><div style="padding-left:38px">Plan Guides</div><div style="padding-left:38px">Sequences</div>
      <div style="padding-left:32px">Query Store</div><div style="padding-left:32px">Service Broker</div><div style="padding-left:32px">Storage</div><div style="padding-left:32px">Security</div>
      <div style="padding-left:38px">Users</div>
      <div class="u" style="padding-left:44px">dbo</div><div class="u" style="padding-left:44px">guest</div><div class="u" style="padding-left:44px">INFORMATION_SCHEMA</div><div class="u" style="padding-left:44px">sys</div><div class="u" style="padding-left:44px">TestMasking</div>
      <div style="padding-left:38px">Roles</div><div style="padding-left:38px">Schemas</div><div style="padding-left:38px">Asymmetric Keys</div><div style="padding-left:38px">Certificates</div>
      <div style="padding-left:38px">Symmetric Keys</div><div style="padding-left:38px">Always Encrypted Keys</div><div style="padding-left:38px">Database Audit Specifications</div><div style="padding-left:38px">Security Policies</div>
      <div class="u" style="padding-left:26px">ps-sqldemo-db</div>
      <div style="padding-left:20px">Security</div><div style="padding-left:20px">Server Objects</div><div style="padding-left:20px">Replication</div>
      <div style="padding-left:20px">Always On High Availability</div><div style="padding-left:20px">Management</div>
    </div>
    <div style="position:absolute;left:108px;top:8px;width:4px;height:272px;background:#e6e9ee"></div>
    <div class="hs" style="left:4px;top:281px;width:60px"></div></div>
  <div class="ed">
    <div class="mg" style="left:12px;top:3px;height:226px"></div>
    <div class="code" style="left:18px;top:22px;font-size:5.4px;line-height:7.75px">
<div class="g">-- Step-1</div><div>Create User <span class="d">Orlando</span> without login</div><div>Go</div><div>Create user <span class="d">Keith</span> without login</div><div>Go</div><div> </div><div class="g">-- Step-2</div><div>Grant Select on <span class="d">SalesLT.Customer</span> to <span class="d">Orlando</span></div><div>Grant Select on <span class="d">SalesLT.Customer</span> to <span class="d">Keith</span></div><div> </div><div> </div><div>CREATE FUNCTION <span class="d">dbo.TestingRLS(@Customer</span> AS <span class="d">sysname)</span></div><div>RETURNS TABLE</div><div>WITH SCHEMABINDING</div><div>AS</div><div>RETURN SELECT 1 AS <span class="d">TestingRLS_result</span></div><div>WHERE <span class="d">@Customer</span> <span class="gr">=</span> <span class="m">USER_NAME</span>();  <span class="g">-- Allow access only to rows that match the user's name</span></div><div> </div><div>CREATE SECURITY POLICY <span class="d">CustomerSecurityPolicy</span></div><div>ADD FILTER PREDICATE  <span class="d">dbo.TestingRLS(FirstName)</span></div><div>ON <span class="d">SalesLT.Customer</span>  <span class="g">-- Apply to the SalesRecords table</span></div><div>WITH (STATE <span class="gr">=</span> ON);</div><div> </div><div> </div><div>Execute as user <span class="gr">=</span> <span class="r">'Orlando'</span></div><div>SELECT * FROM <span class="d">SalesLT.Customer</span>;</div>
    </div>
    <div class="vs" style="top:0;height:275px"></div>
    <div class="zm" style="left:2px;top:274px">100 %</div>
  </div>
  <div class="ys"><span style="margin-left:3px">⚠ Connected. (1/1)</span><span style="position:absolute;left:300px">ps-sqlmi-demo.b6291e3a8ab... pssqldemoadmin (113)  AdventureWorksLT2022  00:00:00  0 rows</span></div>
  <div class="bs"><span style="left:3px">☐ Ready</span><span style="left:363px">Ln 14</span><span style="left:394px">Col 1</span><span style="left:421px">Ch 1</span><span style="left:465px">INS</span></div>
  <div class="pp"></div>
</div>

<!-- ROW 3 MIDDLE -->
<div class="win" style="left:600px;top:674px">
  <div class="ico"></div>
  <div class="tt">SQLQuery21.sql - ps-sqlmi-demo.b6291e3a8ab.database.windows.net.AdventureWorksLT2022 (pssqldemoadmin (113))* - Microsoft SQL Server Management Studio (Administrator)</div>
  <div class="qs">Quick Launch (Ctrl+Q)</div>
  <div class="ctl" style="left:573px">–</div><div class="ctl" style="left:583px">❐</div><div class="ctl" style="left:594px">✕</div>
  <div class="mn">File Edit View Query Project Tools Window Help</div>
  <div class="tb" style="top:19px"></div><div class="box" style="left:211px;top:19px;width:57px"></div>
  <div class="tb" style="top:27px;left:76px;width:160px"></div><div class="box" style="left:23px;top:27px;width:50px">AdventureWorksLT2022</div>
  <div class="dk"></div><div class="oeh">Object Explorer</div>
  <div class="tab a" style="left:117px">SQLQuery21.sql - ...pldemoadmin (113))* ✕</div>
  <div class="tab" style="left:198px">SQLQuery20.sql - ...sqldemoadmin (80)</div>
  <div class="tab" style="left:279px">SQLQuery19.sql - ...pldemoadmin (116)</div>
  <div class="tab" style="left:362px">SQLQuery18.sql - ...sqldemoadmin (80)</div>
  <div class="oe"><div class="con">Connect ▾ ⚲ ▾ ■ ▿ ⟳ ⸺</div>
    <div class="tr">
      <div style="padding-left:14px">ps-sqlmi-demo.b6291e3a8ab.database.windows.net (SQ</div>
      <div style="padding-left:20px">Databases</div>
      <div style="padding-left:26px">System Databases</div><div style="padding-left:26px">Database Snapshots</div>
      <div class="u" style="padding-left:26px">AdventureWorksLT2022</div>
      <div style="padding-left:32px">Database Diagrams</div><div style="padding-left:32px">Tables</div><div style="padding-left:32px">Views</div>
      <div style="padding-left:32px">External Resources</div><div style="padding-left:32px">Synonyms</div><div style="padding-left:32px">Programmability</div>
      <div style="padding-left:38px">Stored Procedures</div><div style="padding-left:38px">Functions</div>
      <div style="padding-left:44px">Table-valued Functions</div><div style="padding-left:44px">Scalar-valued Functions</div>
      <div style="padding-left:44px">Aggregate Functions</div><div style="padding-left:44px">System Functions</div>
      <div style="padding-left:38px">Database Triggers</div><div style="padding-left:38px">Assemblies</div><div style="padding-left:38px">Types</div>
      <div style="padding-left:38px">Rules</div><div style="padding-left:38px">Defaults</div><div style="padding-left:38px">Plan Guides</div><div style="padding-left:38px">Sequences</div>
      <div style="padding-left:32px">Query Store</div><div style="padding-left:32px">Service Broker</div><div style="padding-left:32px">Storage</div><div style="padding-left:32px">Security</div>
      <div style="padding-left:38px">Users</div>
      <div class="u" style="padding-left:44px">dbo</div><div class="u" style="padding-left:44px">guest</div><div class="u" style="padding-left:44px">INFORMATION_SCHEMA</div><div class="u" style="padding-left:44px">sys</div><div class="u" style="padding-left:44px">TestMasking</div>
      <div style="padding-left:38px">Roles</div><div style="padding-left:38px">Schemas</div><div style="padding-left:38px">Asymmetric Keys</div><div style="padding-left:38px">Certificates</div>
      <div style="padding-left:38px">Symmetric Keys</div><div style="padding-left:38px">Always Encrypted Keys</div><div style="padding-left:38px">Database Audit Specifications</div><div style="padding-left:38px">Security Policies</div>
      <div class="u" style="padding-left:26px">ps-sqldemo-db</div>
      <div style="padding-left:20px">Security</div><div style="padding-left:20px">Server Objects</div><div style="padding-left:20px">Replication</div>
      <div style="padding-left:20px">Always On High Availability</div><div style="padding-left:20px">Management</div>
    </div>
    <div style="position:absolute;left:108px;top:8px;width:4px;height:272px;background:#e6e9ee"></div>
    <div class="hs" style="left:4px;top:281px;width:60px"></div></div>
  <div class="ed" style="height:140px">
    <div class="mg" style="left:12px;top:0;height:134px"></div>
    <div class="code" style="left:18px;top:-1px;font-size:5.4px;line-height:7.75px">
<div class="g">-- Step-2</div><div><span class="sel">Grant Select on <span class="d">SalesLT.Customer</span> to <span class="d">Orlando</span> </span></div><div><span class="sel">Grant Select on <span class="d">SalesLT.Customer</span> to <span class="d">Keith</span></span></div><div> </div><div> </div><div>CREATE FUNCTION <span class="d">dbo.TestingRLS(@Customer</span> AS <span class="d">sysname)</span></div><div>RETURNS TABLE</div><div>WITH SCHEMABINDING</div><div>AS</div><div>RETURN SELECT 1 AS <span class="d">TestingRLS_result</span></div><div>WHERE <span class="d">@Customer</span> <span class="gr">=</span> <span class="m">USER_NAME</span>();  <span class="g">-- Allow access only to rows that match the user's name</span></div><div> </div><div>CREATE SECURITY POLICY <span class="d">CustomerSecurityPolicy</span></div><div>ADD FILTER PREDICATE  <span class="d">dbo.TestingRLS(FirstName)</span></div><div>ON <span class="d">SalesLT.Customer</span>  <span class="g">-- Apply to the SalesRecords table</span></div><div>WITH (STATE <span class="gr">=</span> ON);</div>
    </div>
    <div class="vs" style="top:0;height:135px"></div>
    <div class="zm" style="left:2px;top:135px">100 %</div>
  </div>
  <div class="pane" style="top:184px;height:137px;border-top:1px solid #ccd">
    <div class="ptab" style="left:3px;top:1px">⚑ Messages</div>
    <div class="msg" style="left:11px;top:9px">Commands completed successfully.</div>
    <div class="msg" style="left:11px;top:22px">Completion time: 2024-09-23T12:35:54.9283608+00:00</div>
    <div class="vs" style="top:8px;height:120px"></div>
    <div class="zm" style="left:2px;top:131px">100 %</div>
  </div>
  <div class="ys"><span style="margin-left:3px;color:#2a7a2a">✔</span> Query executed successfully.<span style="position:absolute;left:300px">ps-sqlmi-demo.b6291e3a8ab... pssqldemoadmin (113)  AdventureWorksLT2022  00:00:00  0 rows</span></div>
  <div class="bs"><span style="left:3px">☐ Ready</span><span style="left:363px">Ln 11</span><span style="left:394px">Col 1</span><span style="left:421px">Ch 1</span><span style="left:465px">INS</span></div>
  <div class="pp"></div>
</div>

<!-- ROW 3 RIGHT -->
<div class="win" style="left:1200px;top:674px">
  <div class="ico"></div>
  <div class="tt">SQLQuery21.sql - ps-sqlmi-demo.b6291e3a8ab.database.windows.net.AdventureWorksLT2022 (pssqldemoadmin (113))* - Microsoft SQL Server Management Studio (Administrator)</div>
  <div class="qs">Quick Launch (Ctrl+Q)</div>
  <div class="ctl" style="left:573px">–</div><div class="ctl" style="left:583px">❐</div><div class="ctl" style="left:594px">✕</div>
  <div class="mn">File Edit View Query Project Tools Window Help</div>
  <div class="tb" style="top:19px"></div><div class="box" style="left:211px;top:19px;width:57px"></div>
  <div class="tb" style="top:27px;left:76px;width:160px"></div><div class="box" style="left:23px;top:27px;width:50px">AdventureWorksLT2022</div>
  <div class="dk"></div><div class="oeh">Object Explorer</div>
  <div class="tab a" style="left:117px">SQLQuery21.sql - ...pldemoadmin (113))* ✕</div>
  <div class="tab" style="left:198px">SQLQuery20.sql - ...sqldemoadmin (80)</div>
  <div class="tab" style="left:279px">SQLQuery19.sql - ...pldemoadmin (116)</div>
  <div class="tab" style="left:362px">SQLQuery18.sql - ...sqldemoadmin (80)</div>
  <div class="oe"><div class="con">Connect ▾ ⚲ ▾ ■ ▿ ⟳ ⸺</div>
    <div class="tr">
      <div style="padding-left:14px">ps-sqlmi-demo.b6291e3a8ab.database.windows.net (SQ</div>
      <div style="padding-left:20px">Databases</div>
      <div style="padding-left:26px">System Databases</div><div style="padding-left:26px">Database Snapshots</div>
      <div class="u" style="padding-left:26px">AdventureWorksLT2022</div>
      <div style="padding-left:32px">Database Diagrams</div><div style="padding-left:32px">Tables</div><div style="padding-left:32px">Views</div>
      <div style="padding-left:32px">External Resources</div><div style="padding-left:32px">Synonyms</div><div style="padding-left:32px">Programmability</div>
      <div style="padding-left:38px">Stored Procedures</div><div style="padding-left:38px">Functions</div>
      <div style="padding-left:44px">Table-valued Functions</div><div style="padding-left:44px">Scalar-valued Functions</div>
      <div style="padding-left:44px">Aggregate Functions</div><div style="padding-left:44px">System Functions</div>
      <div style="padding-left:38px">Database Triggers</div><div style="padding-left:38px">Assemblies</div><div style="padding-left:38px">Types</div>
      <div style="padding-left:38px">Rules</div><div style="padding-left:38px">Defaults</div><div style="padding-left:38px">Plan Guides</div><div style="padding-left:38px">Sequences</div>
      <div style="padding-left:32px">Query Store</div><div style="padding-left:32px">Service Broker</div><div style="padding-left:32px">Storage</div><div style="padding-left:32px">Security</div>
      <div style="padding-left:38px">Users</div>
      <div class="u" style="padding-left:44px">dbo</div><div class="u" style="padding-left:44px">guest</div><div class="u" style="padding-left:44px">INFORMATION_SCHEMA</div><div class="u" style="padding-left:44px">sys</div><div class="u" style="padding-left:44px">TestMasking</div>
      <div style="padding-left:38px">Roles</div><div style="padding-left:38px">Schemas</div><div style="padding-left:38px">Asymmetric Keys</div><div style="padding-left:38px">Certificates</div>
      <div style="padding-left:38px">Symmetric Keys</div><div style="padding-left:38px">Always Encrypted Keys</div><div style="padding-left:38px">Database Audit Specifications</div><div style="padding-left:38px">Security Policies</div>
      <div class="u" style="padding-left:26px">ps-sqldemo-db</div>
      <div style="padding-left:20px">Security</div><div style="padding-left:20px">Server Objects</div><div style="padding-left:20px">Replication</div>
      <div style="padding-left:20px">Always On High Availability</div><div style="padding-left:20px">Management</div>
    </div>
    <div style="position:absolute;left:108px;top:8px;width:4px;height:272px;background:#e6e9ee"></div>
    <div class="hs" style="left:4px;top:281px;width:60px"></div></div>
  <div class="ed" style="height:140px">
    <div class="mg" style="left:12px;top:0;height:134px"></div>
    <div class="code" style="left:18px;top:-1px;font-size:5.4px;line-height:7.75px">
<div class="g">-- Step-2</div><div>Grant Select on <span class="d">SalesLT.Customer</span> to <span class="d">Orlando</span></div><div>Grant Select on <span class="d">SalesLT.Customer</span> to <span class="d">Keith</span></div><div> </div><div> </div><div>CREATE FUNCTION <span class="d">dbo.TestingRLS(@Customer</span> AS <span class="d">sysname)</span></div><div>RETURNS TABLE</div><div>WITH SCHEMABINDING</div><div>AS</div><div>RETURN SELECT 1 AS <span class="d">TestingRLS_result</span></div><div>WHERE <span class="d">@Customer</span> <span class="gr">=</span> <span class="m">USER_NAME</span>();  <span class="g">-- Allow access only to rows that match the user's name</span></div><div> </div><div><span class="sel">CREATE SECURITY POLICY <span class="d">CustomerSecurityPolicy</span></span></div><div><span class="sel">ADD FILTER PREDICATE  <span class="d">dbo.TestingRLS(FirstName)</span></span></div><div><span class="sel">ON <span class="d">SalesLT.Customer</span>  <span class="g">-- Apply to the SalesRecords table</span></span></div><div><span class="sel">WITH (STATE <span class="gr">=</span> ON);</span></div>
    </div>
    <div class="vs" style="top:0;height:135px"></div>
    <div class="zm" style="left:2px;top:135px">100 %</div>
  </div>
  <div class="pane" style="top:184px;height:137px;border-top:1px solid #ccd">
    <div class="ptab" style="left:3px;top:1px">⚑ Messages</div>
    <div class="msg" style="left:11px;top:9px">Commands completed successfully.</div>
    <div class="msg" style="left:11px;top:22px">Completion time: 2024-09-23T12:38:01.7307561+00:00</div>
    <div class="vs" style="top:8px;height:120px"></div>
    <div class="zm" style="left:2px;top:131px">100 %</div>
  </div>
  <div class="ys"><span style="margin-left:3px;color:#2a7a2a">✔</span> Query executed successfully.<span style="position:absolute;left:300px">ps-sqlmi-demo.b6291e3a8ab... pssqldemoadmin (113)  AdventureWorksLT2022  00:00:00  0 rows</span></div>
  <div class="bs"><span style="left:3px">☐ Ready</span><span style="left:363px">Ln 21</span><span style="left:394px">Col 18</span><span style="left:421px">Ch 18</span><span style="left:465px">INS</span></div>
  <div class="pp"></div>
</div>
</body></html>
